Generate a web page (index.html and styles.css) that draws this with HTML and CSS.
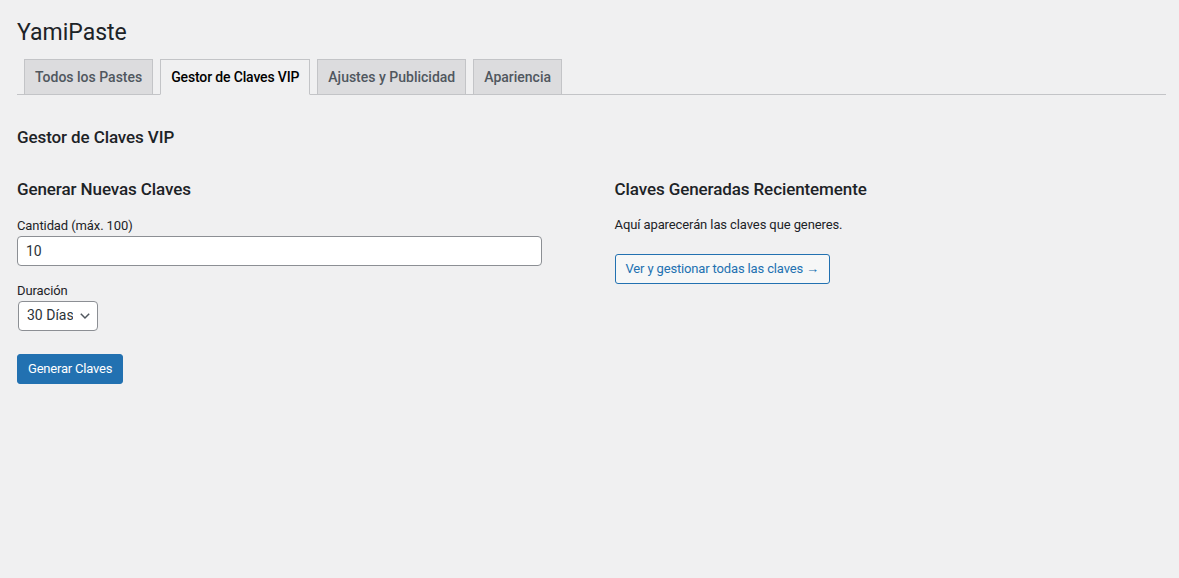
FILE: index.html
```html
<!DOCTYPE html>
<html lang="es">
<head>
<meta charset="utf-8">
<title>YamiPaste</title>
<link rel="stylesheet" href="styles.css">
</head>
<body>
<div class="wrap">
  <h1 class="page-title">YamiPaste</h1>
  <nav class="tabs">
    <a class="tab">Todos los Pastes</a>
    <a class="tab tab-active">Gestor de Claves VIP</a>
    <a class="tab">Ajustes y Publicidad</a>
    <a class="tab">Apariencia</a>
  </nav>
  <h2 class="section-title">Gestor de Claves VIP</h2>
  <div class="columns">
    <section class="col">
      <h3 class="col-title">Generar Nuevas Claves</h3>
      <div class="field">
        <label class="field-label" for="cantidad">Cantidad (máx. 100)</label>
        <input class="text-input" id="cantidad" type="number" value="10">
      </div>
      <div class="field">
        <label class="field-label" for="duracion">Duración</label>
        <div class="select-wrap">
          <select class="select" id="duracion">
            <option>30 Días</option>
          </select>
          <svg class="select-arrow" width="12" height="8" viewBox="0 0 12 8"><path d="M1.8 1.8 L6 6 L10.2 1.8" fill="none" stroke="#50575e" stroke-width="1.5"/></svg>
        </div>
      </div>
      <button class="btn-primary" type="button">Generar Claves</button>
    </section>
    <section class="col">
      <h3 class="col-title">Claves Generadas Recientemente</h3>
      <p class="note">Aquí aparecerán las claves que generes.</p>
      <a class="btn-secondary">Ver y gestionar todas las claves →</a>
    </section>
  </div>
</div>
</body>
</html>
```

FILE: styles.css
```css
* { box-sizing: border-box; }
html, body {
  margin: 0;
  background: #f0f0f1;
}
body {
  color: #1d2327;
  font-family: Roboto, "Liberation Sans", sans-serif;
  font-size: 13px;
  line-height: 1.4;
  letter-spacing: -0.1px;
}
.wrap {
  padding: 18px 13px 0 17px;
}
.page-title {
  margin: 0;
  font-size: 23px;
  font-weight: 400;
  line-height: 30px;
  letter-spacing: 0;
}
.tabs {
  margin-top: 11px;
  display: flex;
  border-bottom: 1px solid #c3c4c7;
  padding-left: 0;
}
.tab {
  margin-left: 7px;
  margin-bottom: -1px;
  padding: 5px 10px;
  border: 1px solid #c3c4c7;
  background: #dcdcde;
  color: #50575e;
  font-size: 14px;
  font-weight: 500;
  line-height: 24px;
  letter-spacing: 0;
  white-space: nowrap;
}
.tab-active {
  background: #f0f0f1;
  border-bottom-color: #f0f0f1;
  color: #000;
  letter-spacing: -0.15px;
}
.section-title {
  margin: 30px 0 0;
  font-size: 17px;
  font-weight: 500;
  line-height: 24px;
}
.columns {
  display: grid;
  grid-template-columns: 1fr 1fr;
  column-gap: 46px;
  margin-top: 28px;
}
.col-title {
  margin: 0;
  font-size: 17px;
  font-weight: 500;
  line-height: 24px;
}
.field {
  margin-top: 16px;
  display: flex;
  flex-direction: column;
  align-items: flex-start;
  gap: 1px;
}
.field-label {
  line-height: 18px;
}
.text-input {
  width: 525px;
  height: 30px;
  padding: 0 8px;
  border: 1px solid #8c8f94;
  border-radius: 4px;
  background: #fff;
  color: #2c3338;
  font: inherit;
  font-size: 14px;
  -moz-appearance: textfield;
  appearance: textfield;
}
.text-input::-webkit-inner-spin-button,
.text-input::-webkit-outer-spin-button { -webkit-appearance: none; margin: 0; }
.select-wrap {
  position: relative;
  margin-left: 1px;
}
.select {
  appearance: none;
  -webkit-appearance: none;
  width: 80px;
  height: 30px;
  padding: 0 24px 0 8px;
  border: 1px solid #8c8f94;
  border-radius: 4px;
  background: #fff;
  color: #2c3338;
  font: inherit;
  font-size: 14px;
}
.select-arrow {
  position: absolute;
  right: 7px;
  top: 11px;
  pointer-events: none;
}
.btn-primary {
  margin-top: 23px;
  height: 30px;
  padding: 0 10px;
  border: 1px solid #2271b1;
  border-radius: 3px;
  background: #2271b1;
  color: #fff;
  font: inherit;
  font-size: 13px;
  letter-spacing: -0.2px;
}
.note {
  margin: 15px 0 0;
  line-height: 18px;
}
.btn-secondary {
  display: inline-flex;
  align-items: center;
  margin-top: 20px;
  height: 30px;
  padding: 0 10px;
  border: 1px solid #2271b1;
  border-radius: 3px;
  background: #f6f7f7;
  color: #2271b1;
  font-size: 13px;
  letter-spacing: -0.15px;
}
```
